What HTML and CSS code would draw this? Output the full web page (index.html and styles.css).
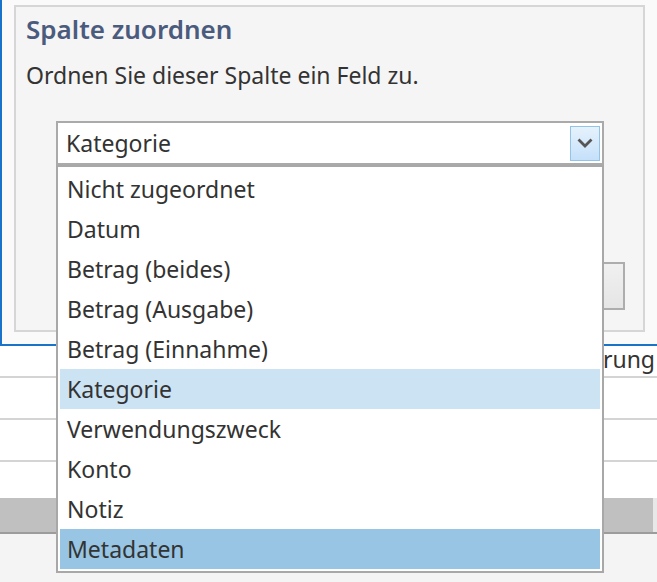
FILE: index.html
```html
<!DOCTYPE html>
<html lang="de">
<head>
    <meta charset="UTF-8">
    <title>Spalte zuordnen</title>
    <link rel="stylesheet" href="styles.css">
</head>
<body>
    <div class="fenster">
        <!-- Dialog -->
        <div class="dialog">
            <div class="panel">
                <h1 class="titel">Spalte zuordnen</h1>
                <p class="hinweis">Ordnen Sie dieser Spalte ein Feld zu.</p>
                <div class="auswahl">
                    <span class="auswahl-text">Kategorie</span>
                    <span class="auswahl-pfeil">
                        <svg width="16" height="10" viewBox="0 0 16 10"><path d="M1.5 1.5 L8 8 L14.5 1.5" fill="none" stroke="#555" stroke-width="2.8"/></svg>
                    </span>
                </div>
                <div class="aktionen">
                    <button class="knopf">OK</button>
                </div>
            </div>
        </div>

        <!-- Tabelle dahinter -->
        <div class="tabelle">
            <div class="tabelle-kopf"><span>Kategorisierung</span></div>
            <div class="tabelle-zeile"></div>
            <div class="tabelle-zeile"></div>
            <div class="tabelle-zeile letzte"></div>
            <div class="tabelle-fuss"></div>
        </div>

        <!-- Aufgeklappte Liste -->
        <ul class="liste">
            <li>Nicht zugeordnet</li>
            <li>Datum</li>
            <li>Betrag (beides)</li>
            <li>Betrag (Ausgabe)</li>
            <li>Betrag (Einnahme)</li>
            <li class="gewaehlt">Kategorie</li>
            <li>Verwendungszweck</li>
            <li>Konto</li>
            <li>Notiz</li>
            <li class="markiert">Metadaten</li>
        </ul>
    </div>
</body>
</html>
```

FILE: styles.css
```css
/* Allgemein */
body {
    margin: 0;
    font-family: 'Noto Sans', 'Open Sans', sans-serif;
    background: #f4f4f4;
    color: #333;
}

.fenster {
    position: relative;
    width: 657px;
    height: 582px;
    overflow: hidden;
}

/* Dialog */
.dialog {
    height: 346px;
    border-left: 2px solid #1a73c9;
    border-bottom: 2px solid #1a73c9;
    background: #fafafa;
    padding: 5px 0 0 12px;
    box-sizing: border-box;
}

.panel {
    width: 631px;
    height: 327px;
    box-sizing: border-box;
    border: 2px solid #d6d6d6;
    background: #f5f5f5;
    padding: 5px 10px 0 10px;
}

.titel {
    margin: 0;
    font-size: 26px;
    font-weight: 600;
    color: #4b5b7e;
    line-height: 34px;
}

.hinweis {
    margin: 14px 0 0;
    font-size: 23px;
    line-height: 30px;
}

.auswahl {
    margin: 31px 0 0 30px;
    width: 548px;
    height: 44px;
    box-sizing: border-box;
    border: 2px solid #aaa;
    background: white;
    display: flex;
    align-items: center;
    justify-content: space-between;
    padding: 0 2px 0 8px;
    font-size: 23px;
}

.auswahl-pfeil {
    width: 30px;
    height: 35px;
    box-sizing: border-box;
    border: 1px solid #92c4ea;
    background: linear-gradient(#e6f2fc, #c5e0fa);
    display: flex;
    align-items: center;
    justify-content: center;
}

.aktionen {
    display: flex;
    justify-content: flex-end;
    margin-top: 97px;
    padding-right: 8px;
}

.knopf {
    width: 120px;
    height: 48px;
    border: 2px solid #adadad;
    background: linear-gradient(#f0f0f0, #e5e5e5);
    font-family: inherit;
    font-size: 20px;
    color: #333;
}

/* Tabelle */
.tabelle {
    background: white;
}

.tabelle-kopf {
    height: 30px;
    border-bottom: 2px solid #d4d4d4;
    text-align: right;
    font-size: 23px;
    line-height: 26px;
    padding-right: 2px;
}

.tabelle-zeile {
    height: 40px;
    border-bottom: 2px solid #d4d4d4;
}

.tabelle-zeile.letzte {
    height: 36px;
    border-bottom: none;
}

.tabelle-fuss {
    height: 34px;
    border-bottom: 2px solid #9c9c9c;
    background: linear-gradient(90deg, #c0c0c0 653px, #e8e8e8 653px);
}

/* Liste */
.liste {
    position: absolute;
    left: 56px;
    top: 165px;
    width: 548px;
    box-sizing: border-box;
    margin: 0;
    padding: 2px;
    list-style: none;
    border: 2px solid #a8a8a8;
    background: white;
}

.liste li {
    height: 40px;
    line-height: 40px;
    padding-left: 7px;
    font-size: 23px;
}

.liste li.gewaehlt {
    background: #cce3f3;
}

.liste li.markiert {
    background: #97c5e3;
}
```
